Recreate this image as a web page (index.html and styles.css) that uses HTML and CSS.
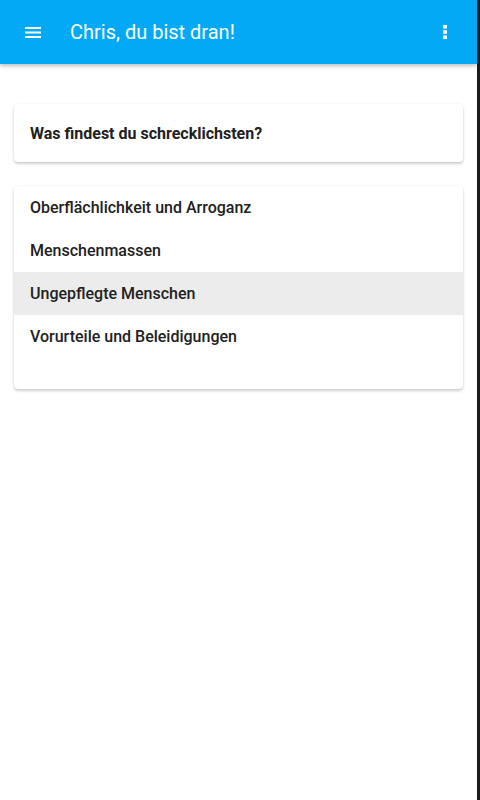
FILE: index.html
```html
<!DOCTYPE html>
<html lang="de">
<head>
    <meta charset="UTF-8">
    <meta name="viewport" content="width=device-width, initial-scale=1.0">
    <title>Chris, du bist dran!</title>
    <link rel="stylesheet" href="styles.css">
</head>
<body>
<div class="screen">
    <div class="app">
        <header class="toolbar">
            <button class="icon-btn menu-btn" aria-label="Menü">
                <svg width="18" height="14" viewBox="0 0 18 14">
                    <rect x="1" y="1" width="16" height="2" fill="#fff"/>
                    <rect x="1" y="5.5" width="16" height="2" fill="#fff"/>
                    <rect x="1" y="10" width="16" height="2" fill="#fff"/>
                </svg>
            </button>
            <h1 class="toolbar-title">Chris, du bist dran!</h1>
            <button class="icon-btn more-btn" aria-label="Mehr">
                <svg width="6" height="16" viewBox="0 0 6 16">
                    <rect x="1" y="1" width="4" height="3.6" fill="#fff"/>
                    <rect x="1" y="6.2" width="4" height="3.6" fill="#fff"/>
                    <rect x="1" y="11.4" width="4" height="3.6" fill="#fff"/>
                </svg>
            </button>
        </header>

        <main class="content">
            <div class="card question">
                <h2 class="question-text">Was findest du schrecklichsten?</h2>
            </div>

            <div class="card answers">
                <ul class="answer-list">
                    <li class="answer">Oberflächlichkeit und Arroganz</li>
                    <li class="answer">Menschenmassen</li>
                    <li class="answer active">Ungepflegte Menschen</li>
                    <li class="answer">Vorurteile und Beleidigungen</li>
                </ul>
            </div>
        </main>
    </div>
    <div class="edge"></div>
</div>
</body>
</html>
```

FILE: styles.css
```css
html, body {
    margin: 0;
    padding: 0;
    height: 100%;
}

body {
    font-family: Roboto, "Liberation Sans", sans-serif;
    color: #212121;
    background: #fff;
}

.screen {
    display: flex;
    height: 800px;
}

.app {
    flex: 1;
    background: #fff;
}

.edge {
    width: 3px;
    background: #1c1c1c;
}

.toolbar {
    display: flex;
    align-items: center;
    height: 64px;
    background: #03a9f4;
    color: #fff;
    box-shadow: 0 2px 4px rgba(0,0,0,0.25);
    position: relative;
    z-index: 1;
}

.icon-btn {
    display: flex;
    align-items: center;
    justify-content: center;
    border: none;
    background: none;
    padding: 0;
    cursor: pointer;
}

.menu-btn {
    width: 24px;
    height: 24px;
    margin-left: 21px;
    margin-top: 1px;
}

.toolbar-title {
    flex: 1;
    margin: 0 0 0 25px;
    font-size: 20px;
    font-weight: 400;
    letter-spacing: 0;
}

.more-btn {
    width: 24px;
    height: 24px;
    margin-right: 20px;
}

.content {
    padding: 40px 14px 0;
    display: flex;
    flex-direction: column;
    gap: 24px;
}

.card {
    background: #fff;
    border-radius: 4px;
    box-shadow: 0 2px 3px rgba(0,0,0,0.18), 0 0 2px rgba(0,0,0,0.08);
}

.question {
    height: 58px;
    display: flex;
    align-items: center;
    padding: 0 16px;
}

.question-text {
    margin: 0;
    font-size: 16px;
    font-weight: 700;
}

.answers {
    padding-bottom: 31px;
}

.answer-list {
    list-style: none;
    margin: 0;
    padding: 0;
}

.answer {
    height: 43px;
    display: flex;
    align-items: center;
    padding: 0 16px;
    font-size: 16px;
    font-weight: 500;
    cursor: pointer;
}

.answer.active {
    background: #ececec;
}
```
